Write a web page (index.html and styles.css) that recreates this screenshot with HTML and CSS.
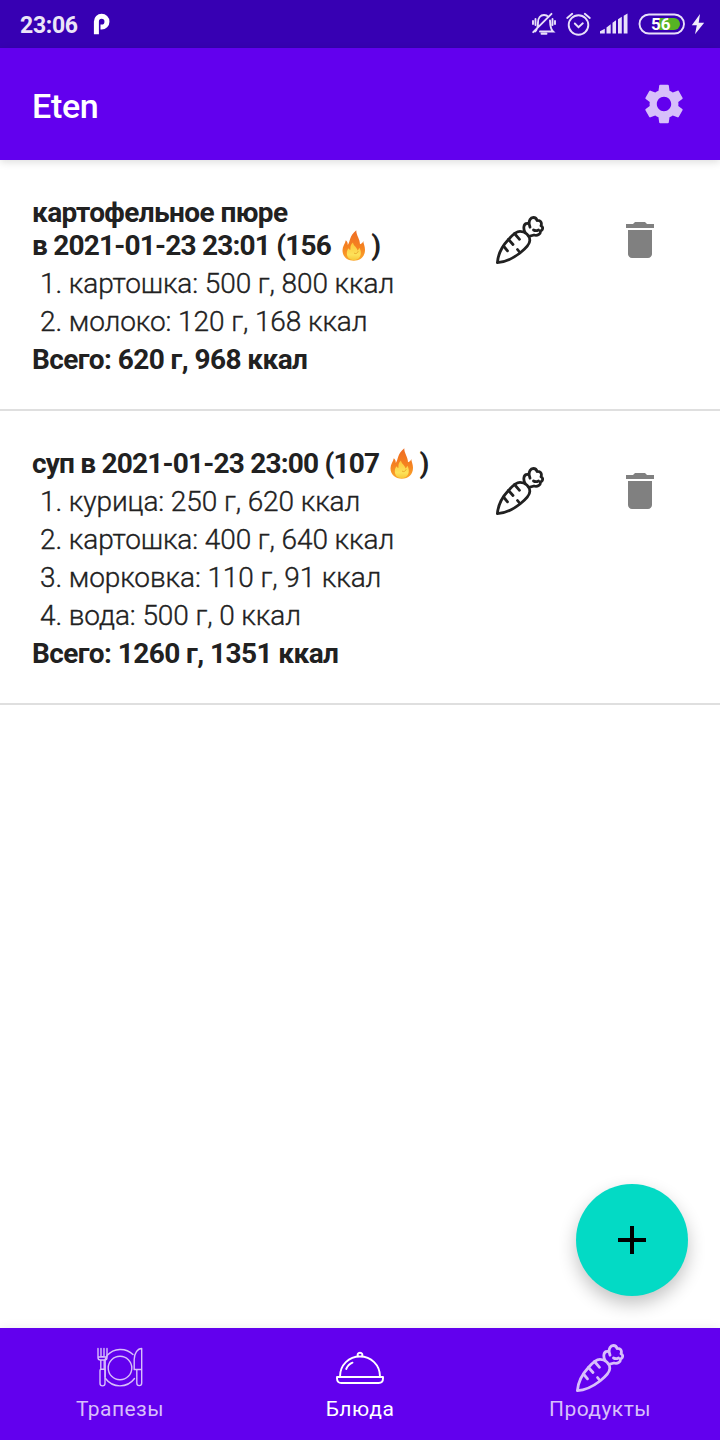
FILE: index.html
```html
<!DOCTYPE html>
<html lang="ru">
<head>
<meta charset="utf-8">
<title>Eten</title>
<link rel="stylesheet" href="styles.css">
</head>
<body>
<svg class="defs" aria-hidden="true">
  <defs>
    <linearGradient id="outer" x1="0" y1="0" x2="0" y2="1"><stop offset="0" stop-color="#ee6c24"/><stop offset=".55" stop-color="#f58220"/><stop offset="1" stop-color="#fba82c"/></linearGradient>
    <linearGradient id="inner" x1="0" y1="0" x2="0" y2="1"><stop offset="0" stop-color="#fdc53a"/><stop offset=".7" stop-color="#fde25a"/><stop offset="1" stop-color="#f7c93c"/></linearGradient>
  </defs>
  <symbol id="carrot" viewBox="0 0 48 48">
    <g fill="none" stroke="currentColor" stroke-width="2.800" stroke-linecap="round" stroke-linejoin="round">
      <path d="M1.400 46.600C2 39 5.500 31 12 24c4.500-5.500 8-8.700 12-8.700 5.200 0 9.800 4.200 9.800 9.200 0 4-4.800 8.500-9.800 12.500C17.500 42 10 46.300 1.400 46.600z"/>
      <path d="M29.200 16.500C27 13 27.500 8 30.500 7.500c1-.2 2 .1 2.700.7C32.800 4.500 34.500 1.500 37.300 1.500c2 0 3.300 1.200 3.700 3 3.200-.5 5.300 2 4 5.200 2.400 1.300 2.200 4.300-.5 5.300.3 3.200-3 5-6.500 4L33 20.300M33.200 8.200l.8 3M37.500 14c1.500.9 3.500.8 5 0"/>
      <path d="M18.500 17.500l5 5.800M12.500 23.500l4.500 5M7.500 30l4 4.800M21.500 33.500l2 2.500"/>
    </g>
  </symbol>
  <symbol id="trash" viewBox="0 0 24 24"><path fill="currentColor" d="M6 19c0 1.100.9 2 2 2h8c1.100 0 2-.9 2-2V7H6v12zM19 4h-3.500l-1-1h-5l-1 1H5v2h14V4z"/></symbol>
  <symbol id="fire" viewBox="0 0 24 31">
    <path fill="url(#outer)" d="M14.300.3C14 5 18 9 18 14.300c1.600-.6 2.800-1.600 3.300-3.300.1 3 1.700 5 1.700 8.800C23 26.500 18.500 30.700 11.800 30.700S.5 26.500.5 20.300C.5 16.500 3.200 13.500 3.800 10.300c1.500 1.200 2 2.700 2 4.700C8.500 11.500 7 6 14.300.3z"/>
    <path fill="url(#inner)" d="M11 12.500c.3 3.300 4.200 5 4.500 8 .9-.8 1.500-1.600 1.700-2.800 1 1.400 1.600 3 1.600 5 0 4.500-2.700 7.300-7 7.300s-7-2.800-7-6.800c0-2 .8-3.500 1.500-5 .5.900 1.100 1.500 2.200 1.600C8.300 17.500 8.300 14.700 11 12.500z"/>
    <path fill="none" stroke="#e9a92c" d="M12 23c2 1.500 3.700-.2 4.200-1.800"/>
  </symbol>
</svg>
<div class="screen">
  <header class="status">
    <span class="clock">23:06</span>
    <svg class="brand" viewBox="0 0 18 22"><path fill="none" stroke="#fff" stroke-width="5" d="M3.400 21.200V8.500A5.200 5.200 0 0 1 8.600 3.300a5.200 5.200 0 0 1 0 10.700H7.500"/></svg>
    <svg class="indicators" viewBox="520 0 200 48">
      <g fill="none" stroke="#e8e0fa" stroke-width="1.900" stroke-linecap="round">
        <path d="M535 31.500c2.500-2 3-4 3-9 0-4.500 2.500-7.500 6-7.500 2 0 3.500.8 4.500 2M550 20.500c.2 6 .7 9 3 11h-13M533.200 32.200L551.500 13.800M533 21v3M535.500 19v6M552.500 19v6M555 21v3M541.500 33.800h5"/>
        <circle cx="578.500" cy="25" r="9.800"/><path d="M574.800 23.500l3.700 3.600 4.300-3.800M567.200 18l5-4.200M584.800 13.800l5 4.200"/>
      </g>
      <path fill="#e8e0fa" d="M600 33.500v-2.300l4.800-2.500v4.800zM606.500 33.500v-6l4.200-3.300v9.300zM612.500 33.500V22.800l3.500-2.600v13.300zM618 33.500V19.200l3.800-2.500v16.800zM623.700 33.500V15.800l3.800-2.300v20z"/>
      <path fill="#56b324" d="M659 18h15a6 6 0 0 1 0 12h-15z"/>
      <rect x="639.500" y="14.500" width="44.500" height="19" rx="9.500" fill="none" stroke="#e8e0fa" stroke-width="1.900"/>
      <text x="651" y="30.300" class="level">56</text>
      <path fill="#f1edfb" d="M700 14l-8.200 11.200h5L695 34.300l9.200-11.600h-5.500z"/>
    </svg>
  </header>
  <div class="appbar">
    <h1 class="app-title">Eten</h1>
    <svg class="icon gear" viewBox="0 0 24 24"><path fill="currentColor" d="M19.140 12.940c.04-.3.060-.61.060-.94 0-.32-.02-.64-.07-.94l2.030-1.580c.18-.14.23-.41.120-.61l-1.920-3.320c-.12-.22-.37-.29-.59-.22l-2.390.96c-.5-.38-1.030-.7-1.620-.94l-.36-2.540c-.04-.24-.24-.41-.48-.41h-3.840c-.24 0-.43.17-.47.41l-.36 2.540c-.59.24-1.130.57-1.620.94l-2.390-.96c-.22-.08-.47 0-.59.22L2.740 8.870c-.12.21-.08.47.12.61l2.030 1.580c-.05.3-.09.63-.09.94s.02.64.07.94l-2.030 1.580c-.18.14-.23.41-.12.61l1.920 3.320c.12.22.37.29.59.22l2.390-.96c.5.38 1.030.7 1.620.94l.36 2.540c.05.24.24.41.48.41h3.840c.24 0 .44-.17.47-.41l.36-2.540c.59-.24 1.130-.56 1.620-.94l2.390.96c.22.08.47 0 .59-.22l1.920-3.320c.12-.22.07-.47-.12-.61l-2.010-1.580zM12 15.600c-1.980 0-3.600-1.620-3.600-3.600s1.620-3.600 3.600-3.600 3.600 1.620 3.600 3.600-1.620 3.600-3.600 3.600z"/></svg>
  </div>
  <main class="list">
    <article class="dish">
      <div class="info">
        <h2 class="name">картофельное пюре<br><span class="when">в 2021-01-23 23:01 (156 <svg class="fire"><use href="#fire"/></svg>)</span></h2>
        <ol class="parts"><li>1. картошка: 500 г, 800 ккал</li><li>2. молоко: 120 г, 168 ккал</li></ol>
        <p class="total">Всего: 620 г, 968 ккал</p>
      </div>
      <div class="actions"><svg class="icon"><use href="#carrot"/></svg><svg class="icon trash"><use href="#trash"/></svg></div>
    </article>
    <article class="dish">
      <div class="info">
        <h2 class="name"><span class="when">суп в 2021-01-23 23:00 (107 <svg class="fire"><use href="#fire"/></svg>)</span></h2>
        <ol class="parts"><li>1. курица: 250 г, 620 ккал</li><li>2. картошка: 400 г, 640 ккал</li><li>3. морковка: 110 г, 91 ккал</li><li>4. вода: 500 г, 0 ккал</li></ol>
        <p class="total">Всего: 1260 г, 1351 ккал</p>
      </div>
      <div class="actions"><svg class="icon"><use href="#carrot"/></svg><svg class="icon trash"><use href="#trash"/></svg></div>
    </article>
  </main>
  <button class="fab" aria-label="Добавить"><svg class="icon" viewBox="0 0 24 24"><path d="M19 13h-6v6h-2v-6H5v-2h6V5h2v6h6v2z"/></svg></button>
  <nav class="tabs">
    <a class="tab">
      <svg class="icon" viewBox="0 0 48 48"><g fill="none" stroke="currentColor" stroke-width="1.400" stroke-linecap="round" stroke-linejoin="round">
        <circle cx="24" cy="24" r="11.800"/><path d="M11 11.500a18 18 0 0 1 26-1M9.500 34.500a18 18 0 0 0 29 0M9 15.500l2-3.500M9.200 33v-18"/>
        <path d="M2 4.500v9.300c0 1.500 1 2.200 2.500 2.200h4c1.500 0 2.500-.7 2.500-2.200V4.500M5 4.500v8.300h3V4.500M2.200 13h8.600M4.800 16v9.500M8.200 16v9.500M4 26.500c0-1 .5-1.300 1.200-1.300h2.600c.7 0 1.200.3 1.200 1.300v12.700c0 3.500-5 3.500-5 0z"/>
        <path d="M45.700 4.500c-4 0-7.500 4.500-7.500 11v10h7.500zM40.800 25.500v13.500c0 3.500 4.900 3.500 4.900 0V25.500"/>
      </g></svg>
      <span class="label">Трапезы</span>
    </a>
    <a class="tab active">
      <svg class="icon" viewBox="0 0 48 48"><g fill="none" stroke="currentColor" stroke-width="1.900" stroke-linecap="round" stroke-linejoin="round">
        <path d="M4 32.500C4 21 13 12.500 24 12.500S44 21 44 32.500M1 33h46v1.500c0 2.800-1.700 4.500-4.300 4.500H5.300C2.700 39 1 37.300 1 34.500zM22 12.300c-1-1.500-.2-3.500 2-3.500s3 2 2 3.500M10.200 25c1.300-3 3.300-5.200 6.300-6.300"/>
      </g></svg>
      <span class="label">Блюда</span>
    </a>
    <a class="tab"><svg class="icon"><use href="#carrot"/></svg><span class="label">Продукты</span></a>
  </nav>
</div>
</body>
</html>
```
FILE: styles.css
```css
* { box-sizing: border-box; margin: 0; padding: 0; }
body { font-family: Roboto, "Noto Sans", sans-serif; background: #fff; color: #212121; }
.defs { position: absolute; width: 0; height: 0; }
.screen { position: relative; display: flex; flex-direction: column; width: 720px; height: 1440px; overflow: hidden; }
.icon { display: block; width: 48px; height: 48px; }
.status { display: flex; flex: none; align-items: center; height: 48px; padding-left: 20px; background: #3700b3; color: #ebe5f7; }
.clock { width: 73px; font-size: 23px; font-weight: 700; letter-spacing: -.3px; line-height: 48px; padding-top: 3px; }
.brand { width: 18px; height: 22px; }
.indicators { width: 200px; height: 48px; margin-left: auto; }
.level { font: 700 17px Roboto, sans-serif; fill: #fff; }
.appbar { z-index: 1; display: flex; flex: none; align-items: center; justify-content: space-between; height: 112px; padding: 0 32px; background: #6200ee; color: #fff; box-shadow: 0 2px 8px rgba(0, 0, 0, .14); }
.app-title { padding-top: 3px; font-size: 34px; font-weight: 500; line-height: 40px; letter-spacing: -.3px; }
.gear { color: #d7bffa; }
.list { flex: 1; }
.dish { display: flex; padding: 36px 56px 30px 32px; border-bottom: 2px solid #dfdfdf; justify-content: space-between; }
.name { margin-bottom: 3px; font-size: 28px; font-weight: 700; line-height: 33px; letter-spacing: -.6px; white-space: nowrap; }
.when { letter-spacing: -.8px; }
.fire { width: 24px; height: 31px; margin: -5px 5px -5px 5px; vertical-align: -1px; }
.parts { padding-left: 8px; list-style: none; font-size: 28px; font-weight: 300; line-height: 38px; letter-spacing: -.09px; white-space: nowrap; -webkit-text-stroke: .35px #212121; }
.total { font-size: 28px; font-weight: 700; line-height: 38px; letter-spacing: -.57px; }
.actions { display: flex; gap: 72px; padding-top: 20px; }
.trash { color: #808080; }
.fab { position: absolute; right: 32px; bottom: 144px; display: grid; place-items: center; width: 112px; height: 112px; border: 0; border-radius: 50%; background: #03dac5; box-shadow: 0 8px 18px rgba(0, 0, 0, .24); }
.tabs { z-index: 1; display: flex; flex: none; height: 112px; background: #6200ee; color: #d8bffb; box-shadow: 0 0 10px rgba(0, 0, 0, .08); }
.tab { display: flex; flex: 1; flex-direction: column; align-items: center; padding-top: 16px; }
.active { color: #fff; }
.label { margin-top: 4px; font-size: 21px; line-height: 26px; letter-spacing: .45px; }
```
